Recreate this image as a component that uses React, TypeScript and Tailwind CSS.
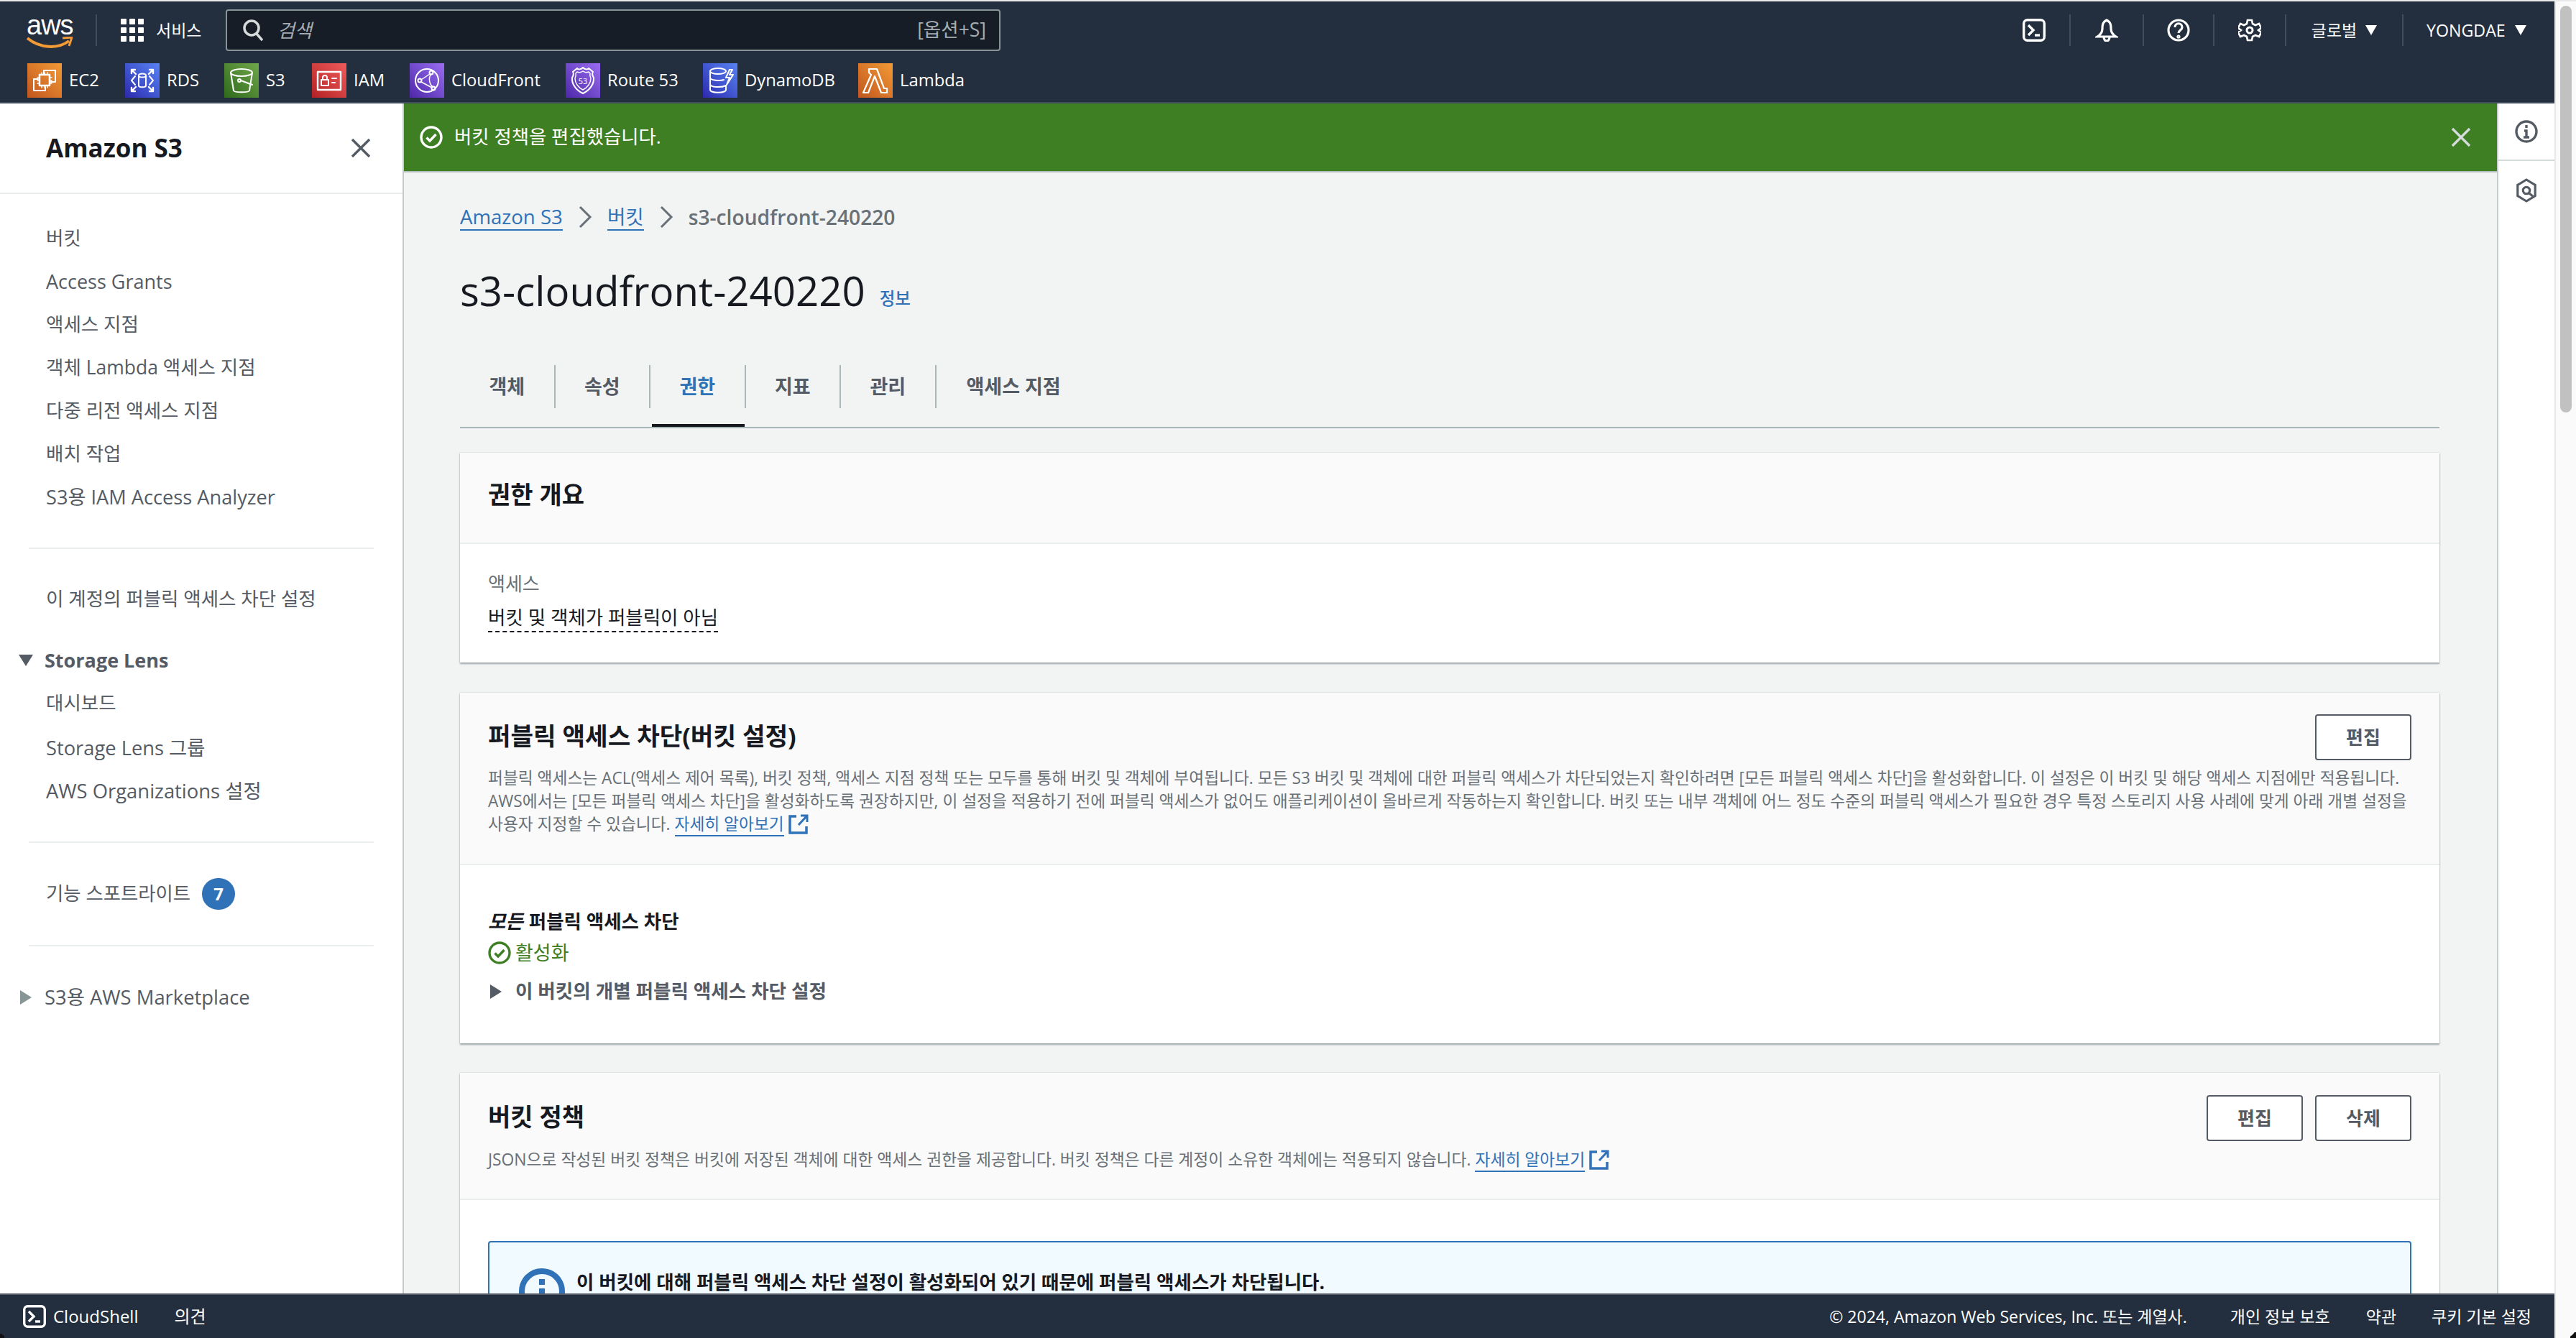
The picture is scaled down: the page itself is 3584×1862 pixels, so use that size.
import React from "react";

const FONT = "font-['Open_Sans','Noto_Sans_CJK_KR',sans-serif]";

function Tile({ c, children }: { c: string; children: React.ReactNode }) {
  return (
    <span className={`w-[48px] h-[48px] shrink-0 flex items-center justify-center ${c}`}>
      <svg viewBox="0 0 48 48" width="48" height="48" fill="none" stroke="#fff" strokeWidth="2" strokeLinejoin="round" strokeLinecap="round">
        {children}
      </svg>
    </span>
  );
}

const services: { name: string; c: string; w: number; icon: React.ReactNode }[] = [
  {
    name: "EC2", w: 136,
    c: "bg-linear-to-tr from-[#c0561f] to-[#f29a35]",
    icon: (
      <>
        <path d="M23 15V10h16v16h-6M25 33v5H9V22h6" />
        <rect x="17" y="16" width="14" height="15" strokeWidth="2.5" />
        <path d="M20 13v3M24 13v3M28 13v3M20 31v3M24 31v3M28 31v3M14 20h3M14 24h3M14 28h3M31 20h3M31 24h3M31 28h3" strokeWidth="1.5" />
      </>
    ),
  },
  {
    name: "RDS", w: 138,
    c: "bg-linear-to-tr from-[#2e27ad] to-[#5a83f5]",
    icon: (
      <>
        <ellipse cx="24" cy="17" rx="5" ry="2.5" />
        <path d="M19 17v14c0 3 10 3 10 0V17" />
        <path d="M14 18l-5 6 5 6M34 18l5 6-5 6" />
        <path d="M9 9l6 6M9 9h5M9 9v5M39 9l-6 6M39 9h-5M39 9v5M9 39l6-6M9 39h5M9 39v-5M39 39l-6-6M39 39h-5M39 39v-5" strokeWidth="2.4" />
      </>
    ),
  },
  {
    name: "S3", w: 122,
    c: "bg-linear-to-tr from-[#2f6a1b] to-[#71a84b]",
    icon: (
      <>
        <ellipse cx="24" cy="13" rx="15" ry="5" />
        <path d="M9 13l4 25c1 3 21 3 22 0l4-25" />
        <circle cx="21" cy="24" r="2" />
        <path d="M23 24l16 6" />
      </>
    ),
  },
  {
    name: "IAM", w: 136,
    c: "bg-linear-to-tr from-[#b32025] to-[#f05a5a]",
    icon: (
      <>
        <rect x="8" y="12" width="32" height="25" strokeWidth="2.4" />
        <rect x="13" y="23" width="10" height="8" />
        <path d="M15 23v-3a3 3 0 0 1 6 0v3M28 21h6M28 27h4" />
      </>
    ),
  },
  {
    name: "CloudFront", w: 217,
    c: "bg-linear-to-tr from-[#4d27a8] to-[#9c6cf2]",
    icon: (
      <>
        <circle cx="24" cy="24" r="16" />
        <circle cx="30" cy="13" r="2.5" />
        <circle cx="14" cy="24" r="2.5" />
        <circle cx="33" cy="35" r="2.5" />
        <path d="M16 23l12-8M16 26l15 8M30 15c-5 6-2 16 3 18" strokeWidth="1.5" />
      </>
    ),
  },
  {
    name: "Route 53", w: 191,
    c: "bg-linear-to-tr from-[#4d27a8] to-[#9c6cf2]",
    icon: (
      <>
        <path d="M24 6c3 3 7 3 8 1l6 5c-2 3-1 5 1 8 1 9-6 18-15 22C15 38 8 29 9 20c2-3 3-5 1-8l6-5c1 2 5 2 8-1z" />
        <path d="M24 11c3 2 6 2 8 1l2 2c-1 3 0 5 1 7 0 7-5 13-11 16-6-3-11-9-11-16 1-2 2-4 1-7l2-2c2 1 5 1 8-1z" strokeWidth="1.4" />
        <text x="24" y="29" textAnchor="middle" fontSize="11" fill="#fff" stroke="none" fontFamily="Open Sans">53</text>
      </>
    ),
  },
  {
    name: "DynamoDB", w: 216,
    c: "bg-linear-to-tr from-[#2e27ad] to-[#5a83f5]",
    icon: (
      <>
        <ellipse cx="21" cy="11" rx="11" ry="4" />
        <path d="M10 11v26c0 5 22 5 22 0v-6M10 20c0 4 14 5 19 3M10 29c0 5 16 5 22 2" />
        <path d="M37 9l-5 11h5l-4 10 9-14h-5l4-7z" />
      </>
    ),
  },
  {
    name: "Lambda", w: 146,
    c: "bg-linear-to-tr from-[#c0561f] to-[#f29a35]",
    icon: <path d="M17 8h9l10 27h4v6h-8L23 18l-9 23H7l11-25-3-3v-5z" strokeWidth="2.2" />,
  },
];

function Sep() {
  return <span className="w-[2px] h-[44px] bg-[#414d5c] shrink-0" />;
}

function Close({ c }: { c: string }) {
  return (
    <svg viewBox="0 0 26 26" width="26" height="26" fill="none" stroke={c} strokeWidth="3.4" className="shrink-0">
      <path d="M1 1l24 24M25 1L1 25" />
    </svg>
  );
}

function ShellIcon() {
  return (
    <svg viewBox="0 0 32 32" width="32" height="32" fill="none" stroke="#fff" strokeWidth="3.4" className="shrink-0">
      <rect x="1.7" y="1.7" width="28.6" height="28.6" rx="5" />
      <path d="M8 9l7 7-7 7" />
      <path d="M17 23h7" />
    </svg>
  );
}

function CheckCircle({ c }: { c: string }) {
  return (
    <svg viewBox="0 0 32 32" width="32" height="32" fill="none" stroke={c} strokeWidth="3.4" className="shrink-0">
      <circle cx="16" cy="16" r="14" />
      <path d="M9.5 16.5l4.5 4.5 8.5-9" />
    </svg>
  );
}

function ExtLink() {
  return (
    <svg viewBox="0 0 28 28" width="28" height="28" fill="none" stroke="#2f72b8" strokeWidth="3.5" className="inline-block align-[-6px] ml-[6px]">
      <path d="M11 3H2v23h23v-9" />
      <path d="M14 15L26 2M17 2h9v9" strokeWidth="3" />
    </svg>
  );
}

function Chevron() {
  return (
    <svg viewBox="0 0 20 32" width="20" height="32" fill="none" stroke="#687078" strokeWidth="3" className="shrink-0">
      <path d="M3 2l14 14L3 30" />
    </svg>
  );
}

function NavItem({ children, size = "text-[26.5px]" }: { children: React.ReactNode; size?: string }) {
  return <div className={`h-[60px] pl-[64px] flex items-center text-[#545b64] whitespace-nowrap ${size}`}>{children}</div>;
}

function Divider({ mt }: { mt: string }) {
  return <div className={`mx-[40px] h-[2px] bg-[#eaeded] ${mt}`} />;
}

function Btn({ children }: { children: React.ReactNode }) {
  return (
    <button className="w-[134px] h-[64px] shrink-0 rounded-[4px] border-2 border-[#545b64] bg-white text-[26px] font-bold text-[#545b64] flex items-center justify-center">
      {children}
    </button>
  );
}

const tabs = ["객체", "속성", "권한", "지표", "관리"];

export default function App() {
  return (
    <div className={`${FONT} relative w-[3584px] h-[1862px] overflow-hidden flex bg-white`}>
      <div className="w-[3554px] h-full flex flex-col">
        {/* Top navigation */}
        <header className="h-[142px] mt-[2px] shrink-0 bg-[#232f3e] border-b-2 border-[#414d5c] text-white flex flex-col">
          <div className="h-[80px] flex items-center shrink-0">
            <div className="w-[133px] pl-[37px] shrink-0 h-[44px]">
              <span className="block text-[38px] leading-[30px] tracking-[-1px] font-['Liberation_Sans',sans-serif]">aws</span>
              <svg viewBox="0 0 64 18" width="64" height="18" fill="none" className="block mt-[1px]">
                <path d="M1 2c17 14 42 16 58 4" stroke="#f29a35" strokeWidth="4" />
                <path d="M50 2l13-1-4 12" stroke="#f29a35" strokeWidth="3" />
              </svg>
            </div>
            <Sep />
            <div className="ml-[33px] w-[32px] h-[32px] grid grid-cols-3 gap-[4px] shrink-0">
              {Array.from({ length: 9 }).map((_, i) => (
                <span key={i} className="bg-white rounded-[1px]" />
              ))}
            </div>
            <span className="ml-[17px] w-[64px] text-[23px] whitespace-nowrap">서비스</span>
            <div className="ml-[33px] w-[1078px] h-[58px] rounded-[4px] border-2 border-[#879596] bg-[#161d26] flex items-center pl-[22px] pr-[18px] text-[#a5adb2]">
              <svg viewBox="0 0 28 32" width="28" height="32" fill="none" stroke="#d5dbdb" strokeWidth="3.5" className="shrink-0">
                <circle cx="12" cy="13" r="10" />
                <path d="M19 21l8 9" />
              </svg>
              <span className="ml-[20px] text-[26px] italic flex-1">검색</span>
              <span className="text-[26.5px] whitespace-nowrap">[옵션+S]</span>
            </div>
            <div className="flex-1" />
            <div className="flex items-center shrink-0">
              <div className="w-[98px] flex justify-center"><ShellIcon /></div>
              <Sep />
              <div className="w-[100px] flex justify-center">
                <svg viewBox="0 0 32 32" width="32" height="32" fill="none" stroke="#fff" strokeWidth="3.2">
                  <path d="M16 2c-6 3-6 8-6 12 0 5-2 8-7 11h26c-5-3-7-6-7-11 0-4 0-9-6-12zM12 25c0 8 8 8 8 0" />
                </svg>
              </div>
              <Sep />
              <div className="w-[96px] flex justify-center">
                <svg viewBox="0 0 32 32" width="32" height="32" fill="none" stroke="#fff" strokeWidth="3.2">
                  <circle cx="16" cy="16" r="14" />
                  <path d="M11 12c0-7 10-7 10 0 0 4-5 4-5 8" />
                  <circle cx="16" cy="25" r="1" />
                </svg>
              </div>
              <Sep />
              <div className="w-[98px] flex justify-center">
                <svg viewBox="0 0 32 32" width="32" height="32" fill="none" stroke="#fff" strokeWidth="3">
                  <circle cx="16" cy="16" r="4" />
                  <path d="M13 2h6l1 5 4 2 5-2 3 6-4 3 4 3-3 6-5-2-4 2-1 5h-6l-1-5-4-2-5 2-3-6 4-3-4-3 3-6 5 2 4-2z" strokeWidth="2.6" />
                </svg>
              </div>
              <Sep />
              <div className="w-[161px] flex items-center justify-center text-[23px] whitespace-nowrap">
                글로벌
                <svg viewBox="0 0 16 14" width="16" height="14" fill="#fff" className="ml-[12px]"><path d="M0 0h16L8 14z" /></svg>
              </div>
              <Sep />
              <div className="w-[210px] pl-[32px] flex items-center text-[23.2px] whitespace-nowrap">
                YONGDAE
                <svg viewBox="0 0 16 14" width="16" height="14" fill="#fff" className="ml-[13px]"><path d="M0 0h16L8 14z" /></svg>
              </div>
            </div>
          </div>
          <div className="flex items-start pl-[38px] pt-[6px]">
            {services.map((s) => (
              <div key={s.name} className="flex items-center shrink-0" style={{ width: s.w }}>
                <Tile c={s.c}>{s.icon}</Tile>
                <span className="ml-[10px] text-[23.8px] whitespace-nowrap font-medium">{s.name}</span>
              </div>
            ))}
          </div>
        </header>

        <div className="flex-1 min-h-0 flex">
          {/* Side navigation */}
          <nav className="w-[562px] shrink-0 bg-white border-r-2 border-[#c6cccc] overflow-hidden">
            <div className="h-[126px] border-b-2 border-[#eaeded] pl-[64px] pr-[40px] flex items-center justify-between">
              <span className="text-[35px] font-bold text-[#16191f]">Amazon S3</span>
              <span className="mr-[5px]"><Close c="#545b64" /></span>
            </div>
            <div className="pt-[32px]">
              <NavItem>버킷</NavItem>
              <NavItem size="text-[27px]">Access Grants</NavItem>
              <NavItem>액세스 지점</NavItem>
              <NavItem>객체 Lambda 액세스 지점</NavItem>
              <NavItem>다중 리전 액세스 지점</NavItem>
              <NavItem>배치 작업</NavItem>
              <NavItem size="text-[27.2px]">S3용 IAM Access Analyzer</NavItem>
            </div>
            <Divider mt="mt-[40px]" />
            <div className="mt-[40px]"><NavItem>이 계정의 퍼블릭 액세스 차단 설정</NavItem></div>
            <div className="mt-[25px] h-[60px] pl-[26px] flex items-center text-[27px] font-bold text-[#545b64]">
              <svg viewBox="0 0 20 16" width="20" height="16" fill="#545b64"><path d="M0 0h20L10 16z" /></svg>
              <span className="ml-[16px]">Storage Lens</span>
            </div>
            <NavItem>대시보드</NavItem>
            <div className="h-[2px]" />
            <NavItem size="text-[27.3px]">Storage Lens 그룹</NavItem>
            <NavItem size="text-[27.4px]">AWS Organizations 설정</NavItem>
            <Divider mt="mt-[40px]" />
            <div className="mt-[41px] h-[60px] pl-[64px] flex items-center text-[26.4px] text-[#545b64]">
              기능 스포트라이트
              <span className="ml-[16px] w-[46px] h-[44px] rounded-full bg-[#2f72b8] text-white text-[24px] font-bold flex items-center justify-center">7</span>
            </div>
            <Divider mt="mt-[41px]" />
            <div className="mt-[41px] h-[60px] pl-[28px] flex items-center text-[27.4px] text-[#545b64]">
              <svg viewBox="0 0 16 20" width="16" height="20" fill="#879596"><path d="M0 0l16 10L0 20z" /></svg>
              <span className="ml-[18px]">S3용 AWS Marketplace</span>
            </div>
          </nav>

          {/* Main column */}
          <main className="flex-1 min-w-0 bg-[#f2f3f3] overflow-hidden flex flex-col">
            <div className="h-[96px] shrink-0 -ml-[2px] bg-[#3f7f24] border-b-2 border-[#b5bcbc] text-white flex items-center pl-[24px] pr-[37px]">
              <CheckCircle c="#fff" />
              <span className="ml-[16px] text-[26.4px] flex-1">버킷 정책을 편집했습니다.</span>
              <Close c="#d5dbdb" />
            </div>

            <div className="pl-[78px] pr-[80px]">
              {/* Breadcrumb */}
              <div className="mt-[42px] h-[40px] flex items-center text-[27.6px] whitespace-nowrap">
                <span className="text-[#2f72b8] border-b-2 border-[#2f72b8] leading-[36px]">Amazon S3</span>
                <span className="mx-[21px]"><Chevron /></span>
                <span className="text-[#2f72b8] border-b-2 border-[#2f72b8] leading-[36px]">버킷</span>
                <span className="mx-[21px]"><Chevron /></span>
                <span className="text-[#687078] font-semibold text-[28.2px]">s3-cloudfront-240220</span>
              </div>
              {/* Title */}
              <div className="mt-[43px] h-[80px] flex items-center">
                <h1 className="text-[56.4px] leading-[80px] text-[#16191f]">s3-cloudfront-240220</h1>
                <span className="ml-[20px] mt-[22px] text-[23.5px] font-medium text-[#2f72b8]">정보</span>
              </div>
              {/* Tabs */}
              <div className="mt-[63px] h-[88px] border-b-2 border-[#aab7b8] flex items-start text-[27px] font-semibold text-[#545b64] whitespace-nowrap">
                {tabs.map((t, i) => (
                  <div key={t} className="relative w-[132.5px] h-[60px] border-r-2 border-[#aab7b8] flex items-center justify-center">
                    <span className={i === 2 ? "text-[#2f72b8]" : ""}>{t}</span>
                    {i === 2 && <span className="absolute left-[2px] right-[0px] top-[82px] h-[4px] bg-[#16191f]" />}
                  </div>
                ))}
                <div className="h-[60px] pl-[42px] flex items-center">액세스 지점</div>
              </div>

              {/* Card 1 */}
              <section className="mt-[34px] h-[292px] bg-white shadow-[0_2px_2px_rgba(0,28,36,0.35),0_0_2px_rgba(0,28,36,0.2)]">
                <div className="h-[127px] bg-[#fafafa] border-b-2 border-[#eaeded] px-[39px] pb-[8px] flex items-center text-[34px] font-bold text-[#16191f]">권한 개요</div>
                <div className="pl-[39px] pt-[37px]">
                  <div className="h-[36px] leading-[36px] text-[26px] text-[#687078]">액세스</div>
                  <div className="mt-[10px]">
                    <span className="text-[26.5px] leading-[38px] text-[#16191f] border-b-2 border-dashed border-[#16191f] inline-block">버킷 및 객체가 퍼블릭이 아님</span>
                  </div>
                </div>
              </section>

              {/* Card 2 */}
              <section className="mt-[42px] h-[488px] bg-white shadow-[0_2px_2px_rgba(0,28,36,0.35),0_0_2px_rgba(0,28,36,0.2)]">
                <div className="h-[240px] bg-[#fafafa] border-b-2 border-[#eaeded] px-[39px] pt-[30px]">
                  <div className="h-[64px] flex items-center justify-between">
                    <h2 className="pb-[4px] text-[34.3px] font-bold text-[#16191f]">퍼블릭 액세스 차단(버킷 설정)</h2>
                    <Btn>편집</Btn>
                  </div>
                  <div className="mt-[9px] text-[22.72px] leading-[32px] text-[#687078] whitespace-nowrap">
                    <div>퍼블릭 액세스는 ACL(액세스 제어 목록), 버킷 정책, 액세스 지점 정책 또는 모두를 통해 버킷 및 객체에 부여됩니다. 모든 S3 버킷 및 객체에 대한 퍼블릭 액세스가 차단되었는지 확인하려면 [모든 퍼블릭 액세스 차단]을 활성화합니다. 이 설정은 이 버킷 및 해당 액세스 지점에만 적용됩니다.</div>
                    <div>AWS에서는 [모든 퍼블릭 액세스 차단]을 활성화하도록 권장하지만, 이 설정을 적용하기 전에 퍼블릭 액세스가 없어도 애플리케이션이 올바르게 작동하는지 확인합니다. 버킷 또는 내부 객체에 어느 정도 수준의 퍼블릭 액세스가 필요한 경우 특정 스토리지 사용 사례에 맞게 아래 개별 설정을</div>
                    <div>
                      사용자 지정할 수 있습니다. <span className="text-[#2f72b8] border-b-2 border-[#2f72b8]">자세히 알아보기</span>
                      <ExtLink />
                    </div>
                  </div>
                </div>
                <div className="pl-[39px] pt-[59px]">
                  <div className="h-[40px] flex items-center text-[26.5px] font-bold text-[#16191f]"><i className="mr-[8px]">모든</i>퍼블릭 액세스 차단</div>
                  <div className="h-[46px] flex items-center text-[27px] text-[#3f7f24]">
                    <CheckCircle c="#3f7f24" />
                    <span className="ml-[6px]">활성화</span>
                  </div>
                  <div className="mt-[11px] h-[40px] flex items-center text-[26.6px] font-bold text-[#545b64]">
                    <svg viewBox="0 0 16 20" width="16" height="20" fill="#545b64" className="ml-[3px]"><path d="M0 0l16 10L0 20z" /></svg>
                    <span className="ml-[19px]">이 버킷의 개별 퍼블릭 액세스 차단 설정</span>
                  </div>
                </div>
              </section>

              {/* Card 3 */}
              <section className="mt-[41px] h-[600px] bg-white shadow-[0_2px_2px_rgba(0,28,36,0.35),0_0_2px_rgba(0,28,36,0.2)]">
                <div className="h-[177px] bg-[#fafafa] border-b-2 border-[#eaeded] px-[39px] pt-[31px]">
                  <div className="h-[64px] flex items-center justify-between">
                    <h2 className="pb-[4px] text-[34px] font-bold text-[#16191f]">버킷 정책</h2>
                    <div className="flex gap-[17px]">
                      <Btn>편집</Btn>
                      <Btn>삭제</Btn>
                    </div>
                  </div>
                  <div className="mt-[10px] text-[22.8px] leading-[32px] text-[#687078] whitespace-nowrap">
                    JSON으로 작성된 버킷 정책은 버킷에 저장된 객체에 대한 액세스 권한을 제공합니다. 버킷 정책은 다른 계정이 소유한 객체에는 적용되지 않습니다. <span className="text-[#2f72b8] border-b-2 border-[#2f72b8]">자세히 알아보기</span>
                    <ExtLink />
                  </div>
                </div>
                <div className="px-[39px] pt-[57px]">
                  <div className="h-[300px] rounded-[4px] border-2 border-[#2f72b8] bg-[#f1faff] pl-[41px] pt-[36px] flex items-start">
                    <svg viewBox="0 0 64 64" width="64" height="64" fill="none" stroke="#2f72b8" strokeWidth="8" className="shrink-0">
                      <circle cx="32" cy="32" r="28" />
                      <path d="M32 15v8M32 28v20" />
                    </svg>
                    <span className="ml-[16px] mt-[4px] text-[26.5px] leading-[30px] font-bold text-[#16191f] whitespace-nowrap">이 버킷에 대해 퍼블릭 액세스 차단 설정이 활성화되어 있기 때문에 퍼블릭 액세스가 차단됩니다.</span>
                  </div>
                </div>
              </section>
            </div>
          </main>

          {/* Right tools */}
          <aside className="w-[80px] shrink-0 bg-white border-l-2 border-[#c6cccc] flex flex-col items-center">
            <div className="h-[80px] w-full border-b-2 border-[#d5dbdb] flex items-center justify-center">
              <svg viewBox="0 0 32 32" width="32" height="32" fill="none" stroke="#545b64" strokeWidth="3.4">
                <circle cx="16" cy="16" r="14" />
                <path d="M16 7v4M13 15h3v9M12 24h8" />
              </svg>
            </div>
            <div className="mt-[24px]">
              <svg viewBox="0 0 32 36" width="30" height="34" fill="none" stroke="#545b64" strokeWidth="3.4">
                <path d="M16 2l13 8v16l-13 8-13-8V10z" />
                <circle cx="16" cy="18" r="5" />
                <path d="M20 22l7 6" />
              </svg>
            </div>
          </aside>
        </div>

        {/* Footer */}
        <footer className="h-[62px] shrink-0 bg-[#232f3e] border-t-2 border-[#545b64] text-white flex items-center pl-[32px] pr-[32px] text-[23px] whitespace-nowrap">
          <ShellIcon />
          <span className="ml-[10px] text-[24px]">CloudShell</span>
          <span className="ml-[50px] text-[24px]">의견</span>
          <span className="ml-auto">© 2024, Amazon Web Services, Inc. 또는 계열사.</span>
          <span className="ml-[60px]">개인 정보 보호</span>
          <span className="ml-[50px]">약관</span>
          <span className="ml-[49px]">쿠키 기본 설정</span>
        </footer>
      </div>

      {/* Browser scrollbar */}
      <div className="w-[30px] h-full bg-[#fafafa] border-l-2 border-[#e8e8e8] pl-[6px] pt-[8px]">
        <div className="w-[16px] h-[566px] rounded-full bg-[#c1c1c1]" />
      </div>

      {/* Window corners */}
      <div className="absolute right-0 bottom-0 w-[16px] h-[16px] rounded-br-[16px] shadow-[8px_8px_0_0_#111]" />
      <div className="absolute left-0 bottom-0 w-[14px] h-[14px] rounded-bl-[14px] shadow-[-8px_8px_0_0_#111]" />
      <div className="absolute left-0 top-0 w-full h-[2px] bg-[#e8e8e8]" />
    </div>
  );
}
